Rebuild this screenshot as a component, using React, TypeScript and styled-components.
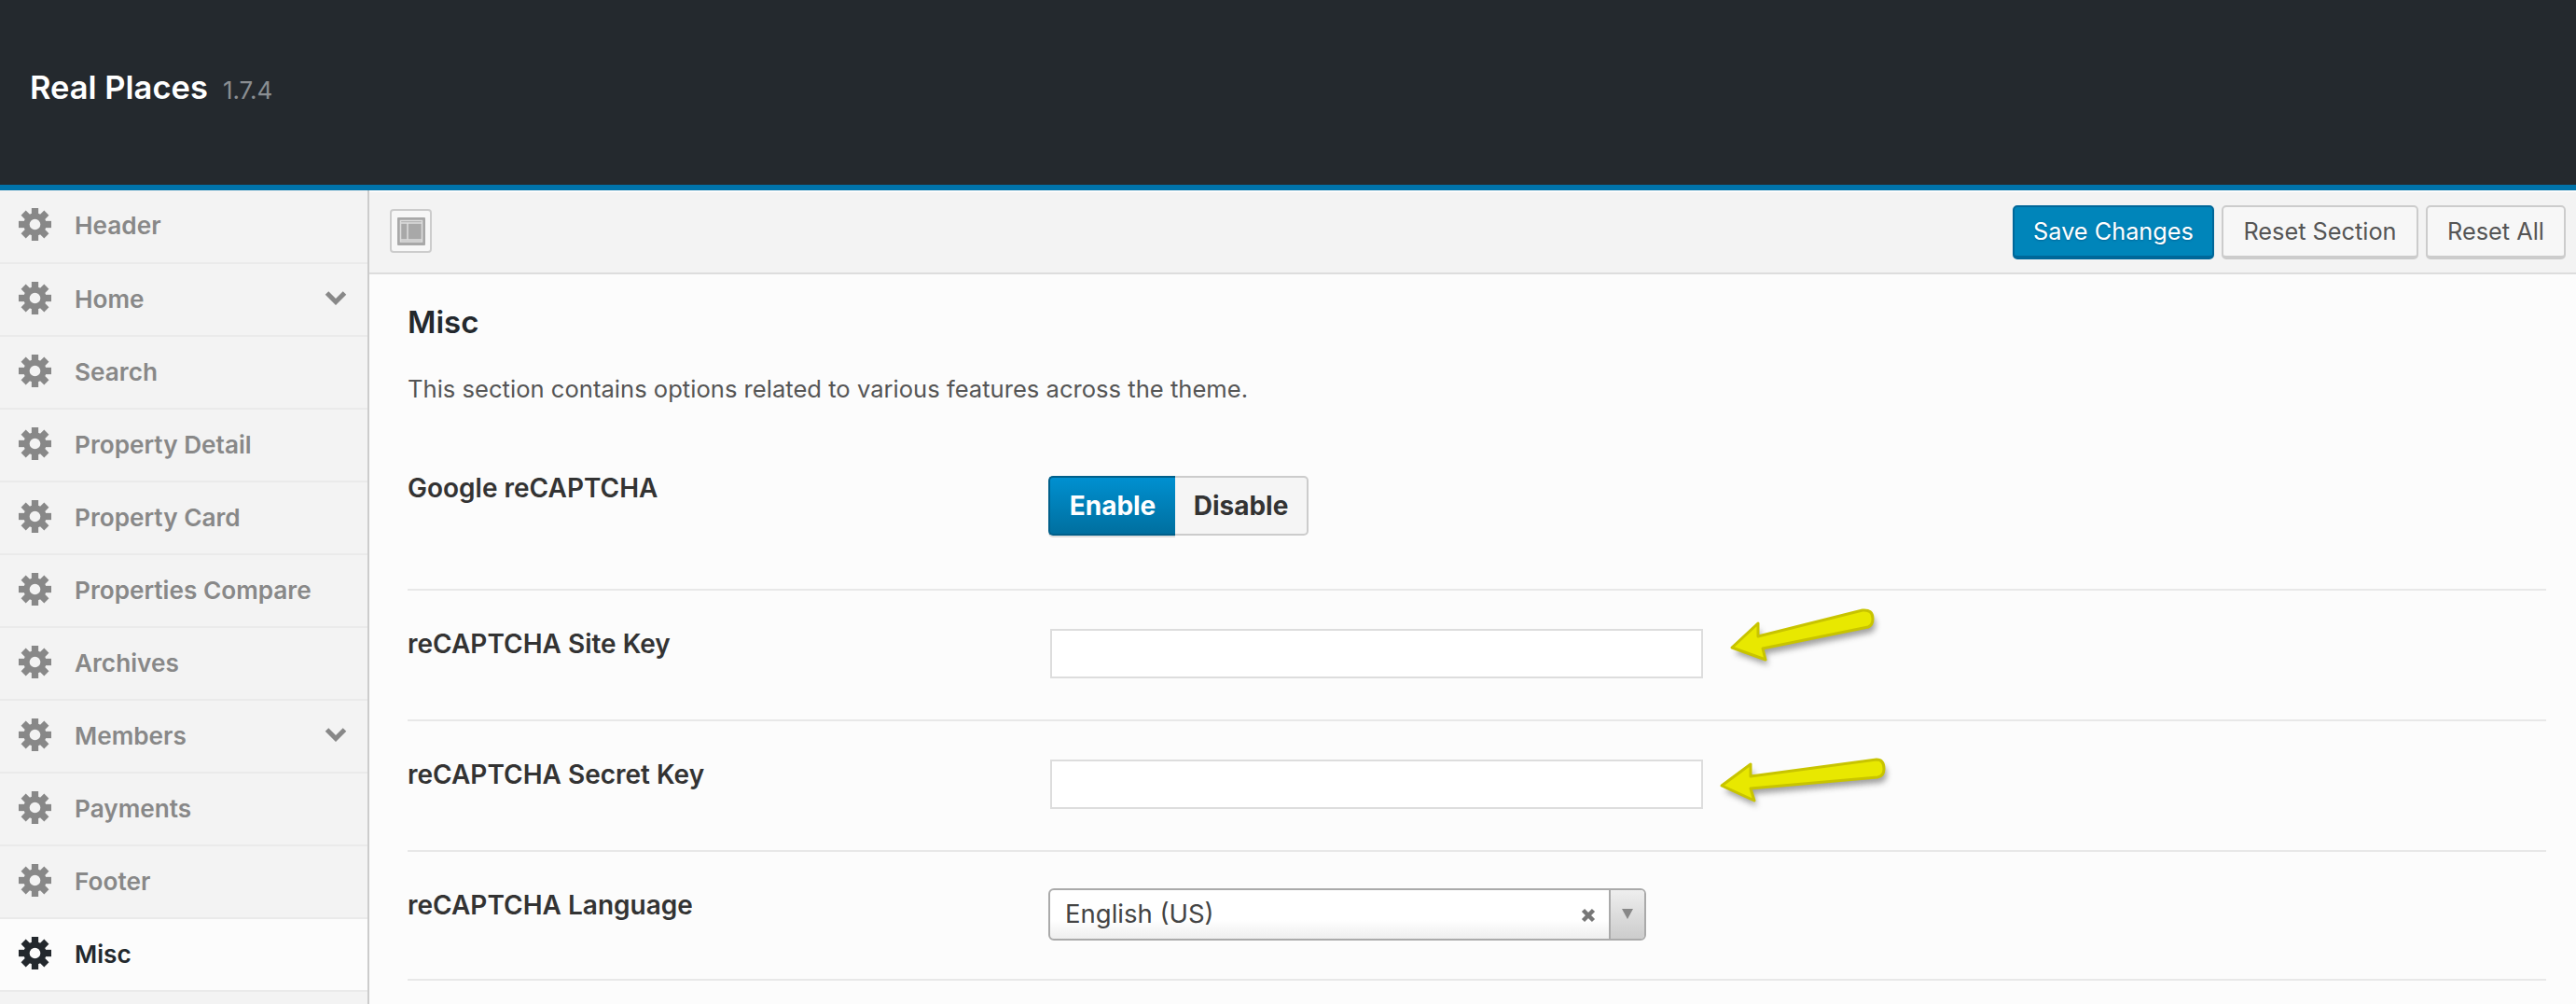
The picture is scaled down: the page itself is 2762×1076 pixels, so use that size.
import React from 'react';
import styled, { createGlobalStyle } from 'styled-components';

const GlobalStyle = createGlobalStyle`
  html, body {
    margin: 0;
    padding: 0;
    background: #fcfcfc;
  }
  body {
    width: 2762px;
    height: 1076px;
    overflow: hidden;
    font-family: Inter, "Liberation Sans", sans-serif;
  }
  * {
    box-sizing: border-box;
  }
`;

const Page = styled.div`
  width: 2762px;
  height: 1076px;
  display: flex;
  flex-direction: column;
  overflow: hidden;
`;

const TopBar = styled.header`
  height: 204px;
  flex: none;
  background: #24292e;
  border-bottom: 6px solid #0073aa;
  padding: 0 0 11px 32px;
  display: flex;
  align-items: center;
  gap: 16px;
`;

const Brand = styled.h1`
  margin: 0;
  font-size: 34.5px;
  font-weight: 600;
  color: #fff;
`;

const Version = styled.span`
  font-size: 26px;
  color: #8a8e92;
  padding-top: 5px;
`;

const Body = styled.div`
  flex: 1;
  display: flex;
  min-height: 0;
`;

const Sidebar = styled.nav`
  width: 396px;
  flex: none;
  background: #f3f3f3;
  border-right: 2px solid #ccc;
`;

const NavItem = styled.div<{ $active?: boolean }>`
  height: 78px;
  display: flex;
  align-items: center;
  padding: 0 22px 0 20px;
  background: ${(p) => (p.$active ? '#fcfcfc' : 'transparent')};
  color: ${(p) => (p.$active ? '#23282d' : '#888')};
  border-bottom: 2px solid #eaeaea;
  font-size: 26.2px;
  font-weight: 600;

  &:first-child {
    height: 79px;
  }
`;

const NavLabel = styled.span`
  margin-left: 25px;
  flex: 1;
  padding-bottom: 2px;
`;

const Main = styled.main`
  flex: 1;
  min-width: 0;
  display: flex;
  flex-direction: column;
`;

const Toolbar = styled.div`
  height: 88px;
  flex: none;
  margin-top: 2px;
  background: #f3f3f3;
  border-bottom: 2px solid #ddd;
  padding: 18px 11px 0 22px;
  display: flex;
  align-items: flex-start;
`;

const LayoutToggle = styled.button`
  width: 45px;
  height: 47px;
  padding: 0;
  border: 2px solid #ccc;
  border-radius: 4px;
  background: #f7f7f7;
  display: flex;
  align-items: center;
  justify-content: center;
`;

const ActionGroup = styled.div`
  margin-left: auto;
  display: flex;
  gap: 8px;
  margin-top: -4px;
`;

const ActionButton = styled.button<{ $primary?: boolean; $w: number }>`
  width: ${(p) => p.$w}px;
  height: 58px;
  border-radius: 5px;
  border: 2px solid ${(p) => (p.$primary ? '#006799' : '#ccc')};
  border-bottom-width: 4px;
  background: ${(p) => (p.$primary ? '#0085ba' : '#f7f7f7')};
  color: ${(p) => (p.$primary ? '#fff' : '#555')};
  font-family: inherit;
  font-size: 25.3px;
  padding: 0 0 2px;
  text-shadow: ${(p) => (p.$primary ? '0 1px 2px #006799' : 'none')};
`;

const Content = styled.div`
  flex: 1;
  background: #fcfcfc;
  padding: 29px 32px 0 41px;
`;

const SectionTitle = styled.h2`
  margin: 0;
  font-size: 33px;
  font-weight: 600;
  line-height: 44px;
  color: #23282d;
`;

const SectionDesc = styled.p`
  margin: 32px 0 0;
  font-size: 25.6px;
  line-height: 36px;
  color: #555;
`;

const FieldRow = styled.div<{ $h: number; $top?: number }>`
  height: ${(p) => p.$h}px;
  display: flex;
  align-items: flex-start;
  border-bottom: 2px solid #e8e8e8;
  padding-top: ${(p) => p.$top ?? 39}px;
`;

const FieldLabel = styled.label`
  width: 687px;
  flex: none;
  font-size: 28px;
  font-weight: 600;
  line-height: 36px;
  color: #333;
`;

const Toggle = styled.div`
  display: flex;
  margin-top: 5px;
`;

const ToggleButton = styled.div<{ $on?: boolean }>`
  height: 64px;
  display: flex;
  align-items: center;
  justify-content: center;
  font-size: 28px;
  font-weight: 700;
  ${(p) =>
    p.$on
      ? `
    width: 136px;
    color: #fff;
    background: linear-gradient(#0090d0, #006f9f);
    border: 2px solid #005f8a;
    border-right: none;
    border-radius: 5px 0 0 5px;
    box-shadow: 0 2px 0 #ddd;
  `
      : `
    width: 143px;
    color: #333;
    background: #f5f5f5;
    border: 2px solid #ccc;
    border-left: none;
    border-radius: 0 5px 5px 0;
  `}
`;

const TextInput = styled.input`
  width: 700px;
  height: 53px;
  margin: 2px 0 0 2px;
  border: 2px solid #ddd;
  background: #fff;
  flex: none;
`;

const Arrow = styled.svg<{ $left: number; $up: number }>`
  flex: none;
  overflow: visible;
  margin: ${(p) => -p.$up}px 0 0 ${(p) => p.$left}px;
`;

const SelectBox = styled.div`
  width: 641px;
  height: 56px;
  display: flex;
  border: 2px solid #aaa;
  border-radius: 6px;
  background: linear-gradient(#fff 0%, #fff 62%, #eee 100%);
  color: #444;
  font-size: 27.5px;
  overflow: hidden;
`;

const SelectValue = styled.span`
  flex: 1;
  padding-left: 16px;
  line-height: 50px;
`;

const SelectClear = styled.span`
  width: 44px;
  display: flex;
  align-items: center;
  justify-content: center;
  padding-top: 2px;
`;

const SelectCaret = styled.span`
  width: 38px;
  border-left: 2px solid #aaa;
  background: linear-gradient(#eee, #ccc);
  display: flex;
  justify-content: center;
  padding-top: 20px;
`;

const Gear = ({ color }: { color: string }) => (
  <svg width="35" height="35" viewBox="0 0 36 36" style={{ flex: 'none', marginTop: -4 }}>
    {[0, 45, 90, 135, 180, 225, 270, 315].map((a) => (
      <rect key={a} x="14.25" y="0" width="7.5" height="9" fill={color} transform={`rotate(${a} 18 18)`} />
    ))}
    <circle cx="18" cy="18" r="9.25" fill="none" stroke={color} strokeWidth="6.5" />
  </svg>
);

const Chevron = () => (
  <svg width="24" height="16" viewBox="0 0 24 16" style={{ marginTop: -4 }}>
    <path d="M2.5 3 L12 12.5 L21.5 3" fill="none" stroke="#888" strokeWidth="5" />
  </svg>
);

const LayoutIcon = () => (
  <svg width="30" height="30" viewBox="0 0 30 30">
    <rect width="30" height="30" rx="1" fill="#a8a8a8" />
    <path d="M3.5 3.5 H26.5 V26 H3.5 Z M3.5 6 H26.5 M3.5 24 H26.5 M11 6 V24" fill="none" stroke="#ddd" strokeWidth="1.5" />
  </svg>
);

const YellowArrow = ({ id, d, left, up }: { id: string; d: string; left: number; up: number }) => (
  <Arrow $left={left} $up={up} width={190} height={70} viewBox="0 0 190 70">
    <defs>
      <filter id={id} x="-20%" y="-40%" width="140%" height="180%">
        <feGaussianBlur stdDeviation="3" />
      </filter>
    </defs>
    <path d={d} fill="#555" opacity="0.55" transform="translate(3 6)" filter={`url(#${id})`} />
    <path d={d} fill="#e8e800" stroke="#c8c400" strokeWidth="3" strokeLinejoin="round" />
  </Arrow>
);

const navItems = [
  { label: 'Header' },
  { label: 'Home', sub: true },
  { label: 'Search' },
  { label: 'Property Detail' },
  { label: 'Property Card' },
  { label: 'Properties Compare' },
  { label: 'Archives' },
  { label: 'Members', sub: true },
  { label: 'Payments' },
  { label: 'Footer' },
  { label: 'Misc', active: true },
];

const App = () => {
  return (
    <Page>
      <GlobalStyle />
      <TopBar>
        <Brand>Real Places</Brand>
        <Version>1.7.4</Version>
      </TopBar>
      <Body>
        <Sidebar>
          {navItems.map((item) => (
            <NavItem key={item.label} $active={item.active}>
              <Gear color={item.active ? '#23282d' : '#888'} />
              <NavLabel>{item.label}</NavLabel>
              {item.sub && <Chevron />}
            </NavItem>
          ))}
        </Sidebar>
        <Main>
          <Toolbar>
            <LayoutToggle>
              <LayoutIcon />
            </LayoutToggle>
            <ActionGroup>
              <ActionButton $primary $w={216}>Save Changes</ActionButton>
              <ActionButton $w={211}>Reset Section</ActionButton>
              <ActionButton $w={150}>Reset All</ActionButton>
            </ActionGroup>
          </Toolbar>
          <Content>
            <SectionTitle>Misc</SectionTitle>
            <SectionDesc>This section contains options related to various features across the theme.</SectionDesc>
            <FieldRow $h={198} $top={70}>
              <FieldLabel>Google reCAPTCHA</FieldLabel>
              <Toggle>
                <ToggleButton $on>Enable</ToggleButton>
                <ToggleButton>Disable</ToggleButton>
              </Toggle>
            </FieldRow>
            <FieldRow $h={140}>
              <FieldLabel>reCAPTCHA Site Key</FieldLabel>
              <TextInput />
              <YellowArrow
                id="arrow-a"
                left={26}
                up={22}
                d="M5 44 L33 18 L33 32 L145 4 Q156 3 156 13 Q156 20 151 22 L38 45 L41 57 Z"
              />
            </FieldRow>
            <FieldRow $h={140}>
              <FieldLabel>reCAPTCHA Secret Key</FieldLabel>
              <TextInput />
              <YellowArrow
                id="arrow-b"
                left={15}
                up={12}
                d="M5 42 L36 19 L36 32 L171 14 Q179 14 179 24 Q179 32 172 33 L36 45 L40 58 Z"
              />
            </FieldRow>
            <FieldRow $h={138}>
              <FieldLabel>reCAPTCHA Language</FieldLabel>
              <SelectBox>
                <SelectValue>English (US)</SelectValue>
                <SelectClear>
                  <svg width="16" height="16" viewBox="0 0 16 16">
                    <path d="M2.5 2.5 L13.5 13.5 M13.5 2.5 L2.5 13.5" stroke="#777" strokeWidth="4.5" />
                  </svg>
                </SelectClear>
                <SelectCaret>
                  <svg width="12" height="11" viewBox="0 0 12 11">
                    <path d="M0 0 H12 L6 11 Z" fill="#888" />
                  </svg>
                </SelectCaret>
              </SelectBox>
            </FieldRow>
          </Content>
        </Main>
      </Body>
    </Page>
  );
};

export default App;
